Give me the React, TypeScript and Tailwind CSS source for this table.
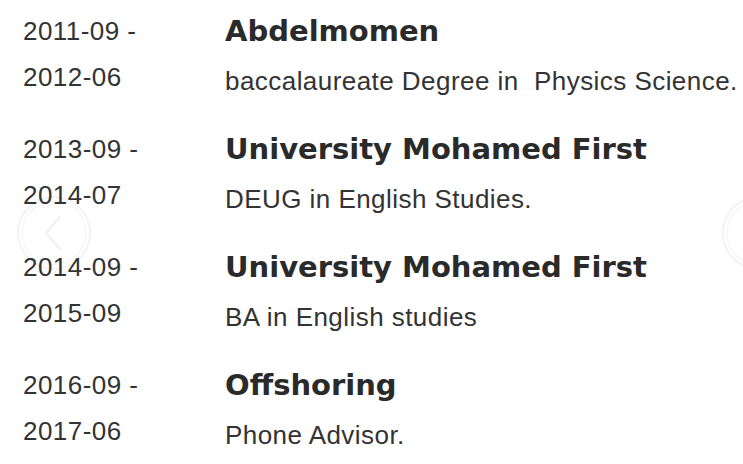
import React from "react";

const entries = [
  { from: "2011-09 -", to: "2012-06", title: "Abdelmomen", desc: "baccalaureate Degree in\u00a0 Physics Science." },
  { from: "2013-09 -", to: "2014-07", title: "University Mohamed First", desc: "DEUG in English Studies." },
  { from: "2014-09 -", to: "2015-09", title: "University Mohamed First", desc: "BA in English studies" },
  { from: "2016-09 -", to: "2017-06", title: "Offshoring", desc: "Phone Advisor." },
];

function Arrow({ dir }: { dir: "left" | "right" }) {
  return (
    <svg width="76" height="76" viewBox="0 0 76 76" fill="none">
      <circle cx="38" cy="38" r="36" stroke="#f3f3f3" strokeWidth="2" />
      <circle cx="38" cy="38" r="32" stroke="#f7f7f7" strokeWidth="1.5" />
      {dir === "left" ? (
        <path d="M44 22 L30 38 L44 54" stroke="#f1f1f1" strokeWidth="2.5" strokeLinecap="round" strokeLinejoin="round" />
      ) : (
        <path d="M32 22 L46 38 L32 54" stroke="#f1f1f1" strokeWidth="2.5" strokeLinecap="round" strokeLinejoin="round" />
      )}
    </svg>
  );
}

export default function App() {
  return (
    <div className="relative w-[743px] h-[464px] overflow-hidden bg-white">
      <div className="absolute left-[16px] top-[195px]">
        <Arrow dir="left" />
      </div>
      <div className="absolute left-[721px] top-[195px]">
        <Arrow dir="right" />
      </div>
      <div className="relative flex flex-col gap-[22px] pt-[8px] pl-[23px]">
        {entries.map((e, i) => (
          <div key={i} className="flex items-start">
            <div
              className="w-[202px] shrink-0 text-[26px] leading-[46px] tracking-[0.45px] text-[#333333]"
              style={{ fontFamily: '"Liberation Sans", Arial, sans-serif' }}
            >
              <div>{e.from}</div>
              <div>{e.to}</div>
            </div>
            <div className="flex flex-col">
              <div
                className="text-[29px] leading-[46px] font-bold text-[#2a2a2a] whitespace-nowrap"
                style={{ fontFamily: '"DejaVu Sans", sans-serif' }}
              >
                {e.title}
              </div>
              <div
                className="mt-[4px] text-[26px] leading-[46px] tracking-[0.45px] text-[#333333] whitespace-nowrap"
                style={{ fontFamily: '"Liberation Sans", Arial, sans-serif' }}
              >
                {e.desc}
              </div>
            </div>
          </div>
        ))}
      </div>
    </div>
  );
}
